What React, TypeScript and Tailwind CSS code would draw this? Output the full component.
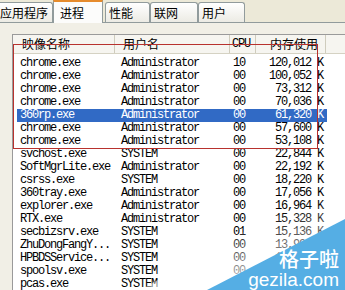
import React from "react";

type Proc = { name: string; user: string; cpu: string; mem: string };

const PROCS: Proc[] = [
  { name: "chrome.exe", user: "Administrator", cpu: "10", mem: "120,012 K" },
  { name: "chrome.exe", user: "Administrator", cpu: "00", mem: "100,052 K" },
  { name: "chrome.exe", user: "Administrator", cpu: "00", mem: "73,312 K" },
  { name: "chrome.exe", user: "Administrator", cpu: "00", mem: "70,036 K" },
  { name: "360rp.exe", user: "Administrator", cpu: "00", mem: "61,320 K" },
  { name: "chrome.exe", user: "Administrator", cpu: "00", mem: "57,600 K" },
  { name: "chrome.exe", user: "Administrator", cpu: "00", mem: "53,108 K" },
  { name: "svchost.exe", user: "SYSTEM", cpu: "00", mem: "22,844 K" },
  { name: "SoftMgrLite.exe", user: "Administrator", cpu: "00", mem: "22,192 K" },
  { name: "csrss.exe", user: "SYSTEM", cpu: "00", mem: "18,220 K" },
  { name: "360tray.exe", user: "Administrator", cpu: "00", mem: "17,056 K" },
  { name: "explorer.exe", user: "Administrator", cpu: "00", mem: "16,964 K" },
  { name: "RTX.exe", user: "Administrator", cpu: "00", mem: "15,328 K" },
  { name: "secbizsrv.exe", user: "SYSTEM", cpu: "01", mem: "15,136 K" },
  { name: "ZhuDongFangY...", user: "SYSTEM", cpu: "00", mem: "13,992 K" },
  { name: "HPBDSService...", user: "SYSTEM", cpu: "00", mem: "12,808 K" },
  { name: "spoolsv.exe", user: "SYSTEM", cpu: "00", mem: "11,944 K" },
  { name: "pcas.exe", user: "SYSTEM", cpu: "00", mem: "9,132 K" },
];

const SELECTED = 4;
const cjk = "font-['SimSun','Noto_Sans_CJK_SC',sans-serif]";
const mono = "font-['Liberation_Mono',monospace] text-[12px] tracking-[-1.2px]";

function Tab({ label, w, active }: { label: string; w: string; active?: boolean }) {
  if (active) {
    return (
      <div
        className={`relative z-10 -mb-px flex h-[23px] ${w} items-start border-x border-t-2 border-x-[#919B9C] border-t-[#E68B2C] bg-[#FCFCFB] pl-[6px] pt-[2px] text-[12px] text-black`}
      >
        {label}
      </div>
    );
  }
  return (
    <div
      className={`mt-[2px] flex h-[20px] ${w} items-center rounded-t-[3px] border-x border-t border-[#919B9C] bg-gradient-to-b from-white to-[#ECEBE4] pl-[3px] text-[12px] text-black`}
    >
      {label}
    </div>
  );
}

export default function App() {
  return (
    <div className={`relative h-[290px] w-[345px] overflow-hidden bg-[#F1EFE6] ${cjk}`}>
      {/* Tabs */}
      <div className="flex h-[23px] items-start border-b border-[#919B9C] bg-[#ECE9D8]">
        <div className="-ml-[4px] flex">
          <Tab label="应用程序" w="w-[57px]" />
        </div>
        <Tab label="进程" w="w-[50px]" active />
        <div className="ml-[2px] flex">
          <Tab label="性能" w="w-[45px]" />
          <Tab label="联网" w="w-[48px]" />
          <Tab label="用户" w="w-[47px]" />
        </div>
      </div>

      {/* Panel */}
      <div className="pl-[12px] pt-[11px]">
        <div className="h-[260px] w-[345px] border border-[#9A9A9A] bg-white">
          {/* Header */}
          <div className="flex h-[19px] items-center border-b border-[#D5D2C3] bg-[#F6F5F0] text-[12px] text-black">
            <div className="flex h-full w-[102px] items-center border-r border-[#CFCCBD] pl-[9px]">映像名称</div>
            <div className="flex h-full w-[115px] items-center border-r border-[#CFCCBD] pl-[8px]">用户名</div>
            <div className={`flex h-full w-[26px] items-center border-r border-[#CFCCBD] pl-[2px] ${mono}`}>CPU</div>
            <div className="flex h-full w-[70px] items-center justify-end border-r border-[#CFCCBD] pr-[7px]">内存使用</div>
            <div className="h-full flex-1" />
          </div>

          {/* Rows */}
          <div className="ml-[4px] mt-[3px] flex w-[310px] flex-col">
            {PROCS.map((p, i) => (
              <div
                key={i}
                className={`flex h-[13px] items-center leading-[13px] ${mono} ${
                  i === SELECTED ? "bg-[#316AC5] text-white" : "text-black"
                }`}
              >
                <div className="w-[98px] overflow-hidden whitespace-nowrap pl-[3px]">{p.name}</div>
                <div className="w-[115px] overflow-hidden whitespace-nowrap pl-[6px]">{p.user}</div>
                <div className="w-[26px] pl-[3px]">{p.cpu}</div>
                <div className="w-[71px] whitespace-nowrap pr-[4px] text-right">{p.mem}</div>
              </div>
            ))}
          </div>
        </div>
      </div>

      {/* Red highlight box */}
      <div className="pointer-events-none absolute left-[13px] top-[44px] h-[105px] w-[305px] border border-[#B8322E]" />

      {/* Watermark */}
      <svg className="pointer-events-none absolute bottom-0 right-0" width="345" height="290" viewBox="0 0 345 290">
        <defs>
          <linearGradient id="fade" x1="0.55" y1="1" x2="0.3" y2="0.5">
            <stop offset="0" stopColor="#ffffff" stopOpacity="0.9" />
            <stop offset="1" stopColor="#ffffff" stopOpacity="0" />
          </linearGradient>
        </defs>
        <polygon points="140,290 345,175 345,222 207,290" fill="url(#fade)" />
        <polygon points="207,290 345,219 345,290" fill="#55AEE4" />
      </svg>
      <div className="pointer-events-none absolute right-[6px] top-[248px] flex flex-col items-end text-white">
        <span className="font-['Noto_Sans_CJK_SC',sans-serif] text-[20px] font-medium leading-[22px]">格子啦</span>
        <span className="font-['Liberation_Sans',Arial,sans-serif] text-[19px] leading-[20px]">gezila.com</span>
      </div>
    </div>
  );
}
